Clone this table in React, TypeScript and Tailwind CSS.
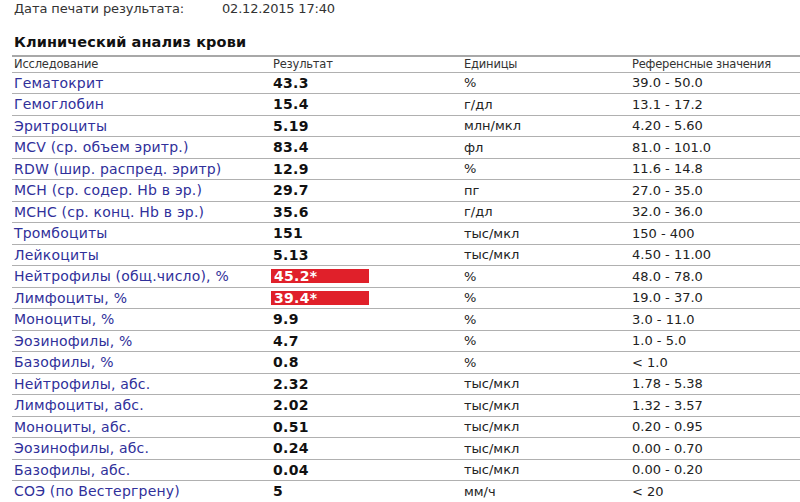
const ROWS: { name: string; value: string; unit: string; ref: string; flag?: boolean }[] = [
  { name: 'Гематокрит', value: '43.3', unit: '%', ref: '39.0 - 50.0' },
  { name: 'Гемоглобин', value: '15.4', unit: 'г/дл', ref: '13.1 - 17.2' },
  { name: 'Эритроциты', value: '5.19', unit: 'млн/мкл', ref: '4.20 - 5.60' },
  { name: 'MCV (ср. объем эритр.)', value: '83.4', unit: 'фл', ref: '81.0 - 101.0' },
  { name: 'RDW (шир. распред. эритр)', value: '12.9', unit: '%', ref: '11.6 - 14.8' },
  { name: 'MCH (ср. содер. Hb в эр.)', value: '29.7', unit: 'пг', ref: '27.0 - 35.0' },
  { name: 'MCHC (ср. конц. Hb в эр.)', value: '35.6', unit: 'г/дл', ref: '32.0 - 36.0' },
  { name: 'Тромбоциты', value: '151', unit: 'тыс/мкл', ref: '150 - 400' },
  { name: 'Лейкоциты', value: '5.13', unit: 'тыс/мкл', ref: '4.50 - 11.00' },
  { name: 'Нейтрофилы (общ.число), %', value: '45.2*', unit: '%', ref: '48.0 - 78.0', flag: true },
  { name: 'Лимфоциты, %', value: '39.4*', unit: '%', ref: '19.0 - 37.0', flag: true },
  { name: 'Моноциты, %', value: '9.9', unit: '%', ref: '3.0 - 11.0' },
  { name: 'Эозинофилы, %', value: '4.7', unit: '%', ref: '1.0 - 5.0' },
  { name: 'Базофилы, %', value: '0.8', unit: '%', ref: '< 1.0' },
  { name: 'Нейтрофилы, абс.', value: '2.32', unit: 'тыс/мкл', ref: '1.78 - 5.38' },
  { name: 'Лимфоциты, абс.', value: '2.02', unit: 'тыс/мкл', ref: '1.32 - 3.57' },
  { name: 'Моноциты, абс.', value: '0.51', unit: 'тыс/мкл', ref: '0.20 - 0.95' },
  { name: 'Эозинофилы, абс.', value: '0.24', unit: 'тыс/мкл', ref: '0.00 - 0.70' },
  { name: 'Базофилы, абс.', value: '0.04', unit: 'тыс/мкл', ref: '0.00 - 0.20' },
  { name: 'СОЭ (по Вестергрену)', value: '5', unit: 'мм/ч', ref: '< 20' },
]

export default function App() {
  return (
    <div className="h-[502px] w-[800px] overflow-hidden bg-white font-['Verdana','DejaVu_Sans',sans-serif]">
      {/* дата печати */}
      <div className="flex h-[17px] items-center pl-[14px] text-[13px] leading-none text-[#333]">
        <span className="w-[208px] tracking-[-0.1px]">Дата печати результата:</span>
        <span className="tracking-[-0.2px]">02.12.2015 17:40</span>
      </div>

      <h1 className="mt-[16px] pl-[14px] text-[14.5px] font-bold leading-[18px] tracking-[0.1px] text-[#111]">
        Клинический анализ крови
      </h1>

      <div className="ml-[12px] mt-[4px] border-t-2 border-[#a8a8a8]">
        {/* шапка */}
        <div className="grid h-[15.5px] grid-cols-[259px_191px_168px_1fr] items-center border-b border-[#b0b0b0] text-[11.5px] leading-none tracking-[-0.2px] text-[#333]">
          <div className="pl-[2px]">Исследование</div>
          <div className="pl-[2px]">Результат</div>
          <div className="pl-[2px]">Единицы</div>
          <div className="pl-[2px]">Референсные значения</div>
        </div>

        {ROWS.map(r => (
          <div
            key={r.name}
            className="grid h-[21.5px] grid-cols-[259px_191px_168px_1fr] items-center border-b border-[#b0b0b0] text-[13px] leading-none"
          >
            <div className="whitespace-nowrap pl-[2px] text-[14px] tracking-[0.2px] text-[#30309a]">{r.name}</div>
            <div>
              {r.flag ? (
                <div className="flex h-[14px] w-[98px] items-center bg-[#e0202a] pl-[3px] text-[14px] font-bold tracking-[0.3px] text-white">
                  {r.value}
                </div>
              ) : (
                <div className="pl-[2px] text-[14px] font-bold tracking-[0.3px] text-[#111]">{r.value}</div>
              )}
            </div>
            <div className="pl-[2px] text-[#222]">{r.unit}</div>
            <div className="pl-[2px] text-[#222]">{r.ref}</div>
          </div>
        ))}
      </div>
    </div>
  )
}
